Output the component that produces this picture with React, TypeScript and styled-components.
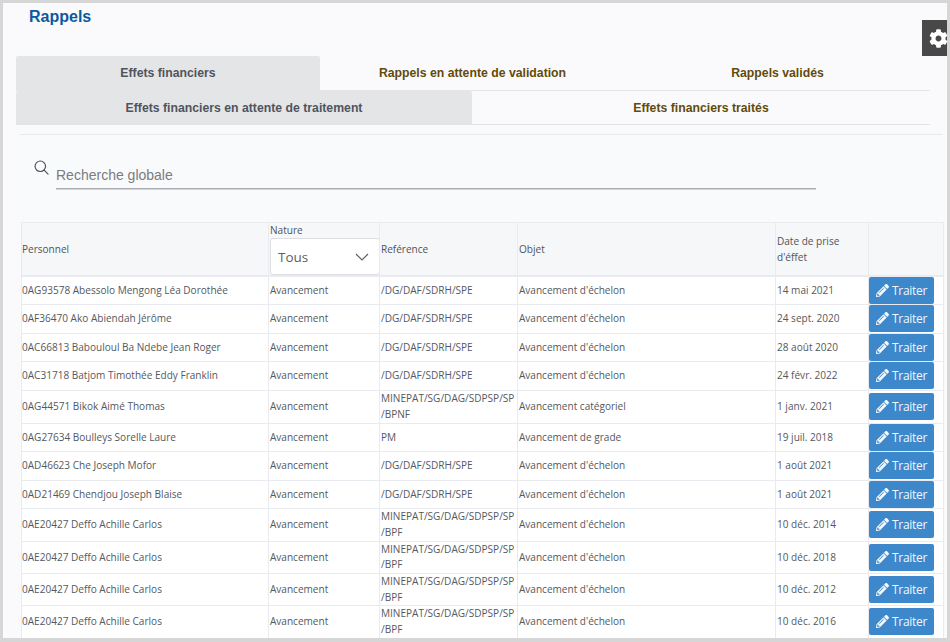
import React from "react";
import styled, { createGlobalStyle } from "styled-components";
import { FaCog, FaPencilAlt } from "react-icons/fa";

const Global = createGlobalStyle`
  html, body { margin: 0; padding: 0; background: #fff; }
  * { box-sizing: border-box; }
`;

const Frame = styled.div`
  position: relative;
  width: 950px;
  height: 642px;
  border: solid #d6d6d6;
  border-width: 3px 3px 4px 3px;
  background: #fafafc;
  overflow: hidden;
  font-family: "Liberation Sans", Arial, sans-serif;
`;

const Title = styled.h1`
  margin: 0;
  padding: 5px 0 0 26px;
  height: 53px;
  font-size: 16px;
  line-height: 17px;
  font-weight: 700;
  color: #0b5a9f;
`;

const GearBox = styled.div`
  position: absolute;
  top: 17px;
  right: 0;
  width: 25px;
  height: 36px;
  background: #484848;
  color: #fff;
  overflow: hidden;
  display: flex;
  align-items: center;
  padding-left: 7px;
  svg { flex: none; }
`;

const TabRow = styled.div<{ $h: number }>`
  display: flex;
  width: 914px;
  margin-left: 13px;
  height: ${(p) => p.$h}px;
`;

const Tab = styled.div<{ $active?: boolean; $w: number }>`
  width: ${(p) => p.$w}px;
  flex: none;
  display: flex;
  align-items: center;
  justify-content: center;
  font-size: 12.25px;
  font-weight: 700;
  background: ${(p) => (p.$active ? "#e4e5e7" : "transparent")};
  color: ${(p) => (p.$active ? "#50545c" : "#634a0a")};
  border-bottom: 1px solid ${(p) => (p.$active ? "#e4e5e7" : "#e2e4e8")};
  border-radius: ${(p) => (p.$active ? "2px 2px 0 0" : "0")};
`;

const Panel = styled.div`
  margin: 9px 4px 0 17px;
  border-top: 1px solid #e8eaee;
  background: #f9fafc;
`;

const SearchRow = styled.div`
  display: flex;
  align-items: flex-start;
  height: 87px;
  padding: 25px 0 0 14px;
  color: #4a4d52;
`;

const SearchIcon = styled.svg`
  width: 15px;
  height: 15px;
  flex: none;
  margin-right: 7px;
`;

const SearchField = styled.div`
  width: 760px;
  height: 29px;
  padding-top: 7px;
  border-bottom: 1px solid #a9abae;
  font-size: 14px;
  line-height: 17px;
  color: #7a7c80;
  box-shadow: 0 1px 0 #d5d6d8;
`;

const Table = styled.table`
  width: 922px;
  margin-left: 1px;
  table-layout: fixed;
  border-collapse: collapse;
  border: 1px solid #e9ebf0;
  font-family: "Open Sans", sans-serif;
  font-size: 10.05px;
  color: #55585e;
`;

const HeadRow = styled.tr`
  height: 53px;
  background: #f6f7f9;
`;

const Th = styled.th`
  padding: 0 0 0 1px;
  border: 1px solid #e9ebf0;
  border-bottom-width: 2px;
  font-weight: 400;
  text-align: left;
  line-height: 16px;
  vertical-align: middle;
  color: #505359;
  &:first-child { padding-left: 0; }
`;

const NatureLabel = styled.div`
  line-height: 16px;
  margin-top: -1px;
`;

const Select = styled.div`
  width: 110px;
  height: 37px;
  padding: 1px 10px 0 7px;
  background: #fff;
  border: 1px solid #dcdee2;
  border-radius: 3px;
  display: flex;
  align-items: center;
  justify-content: space-between;
  font-size: 13.5px;
  color: #5d6066;
`;

const BodyRow = styled.tr<{ $h: number }>`
  height: ${(p) => p.$h}px;
  background: #fff;
`;

const Td = styled.td`
  padding: 0 0 0 1px;
  border: 1px solid #e9ebf0;
  line-height: 15.5px;
  vertical-align: middle;
  word-break: break-word;
  &:first-child { padding-left: 0; }
`;

const ActionCell = styled(Td)`
  padding: 0;
`;

const Button = styled.button`
  display: flex;
  align-items: center;
  justify-content: center;
  gap: 3px;
  width: 65px;
  height: 27px;
  padding: 0;
  border: 0;
  border-radius: 2px;
  background: #3d87cb;
  color: #f2f7fc;
  font-family: "Open Sans", sans-serif;
  font-size: 12px;
  letter-spacing: -0.3px;
`;

type Row = [string, string, string, string, number];
const D = "/DG/DAF/SDRH/SPE";
const M = "MINEPAT/SG/DAG/SDPSP/SP";
const E = "Avancement d'échelon";

const rows: Row[] = [
  ["0AG93578 Abessolo Mengong Léa Dorothée", D, E, "14 mai 2021", 28],
  ["0AF36470 Ako Abiendah Jérôme", D, E, "24 sept. 2020", 28.5],
  ["0AC66813 Babouloul Ba Ndebe Jean Roger", D, E, "28 août 2020", 28.5],
  ["0AC31718 Batjom Timothée Eddy Franklin", D, E, "24 févr. 2022", 28.5],
  ["0AG44571 Bikok Aimé Thomas", M + " /BPNF", "Avancement catégoriel", "1 janv. 2021", 33],
  ["0AG27634 Boulleys Sorelle Laure", "PM", "Avancement de grade", "19 juil. 2018", 28.5],
  ["0AD46623 Che Joseph Mofor", D, E, "1 août 2021", 28.5],
  ["0AD21469 Chendjou Joseph Blaise", D, E, "1 août 2021", 28.5],
  ["0AE20427 Deffo Achille Carlos", M + " /BPF", E, "10 déc. 2014", 32.5],
  ["0AE20427 Deffo Achille Carlos", M + " /BPF", E, "10 déc. 2018", 32.5],
  ["0AE20427 Deffo Achille Carlos", M + " /BPF", E, "10 déc. 2012", 31.5],
  ["0AE20427 Deffo Achille Carlos", M + " /BPF", E, "10 déc. 2016", 32.5],
];

export default function App() {
  return (
    <>
      <Global />
      <Frame>
        <Title>Rappels</Title>
        <GearBox>
          <FaCog size={19} />
        </GearBox>
        <TabRow $h={35}>
          <Tab $active $w={304}>Effets financiers</Tab>
          <Tab $w={305}>Rappels en attente de validation</Tab>
          <Tab $w={305}>Rappels validés</Tab>
        </TabRow>
        <TabRow $h={34}>
          <Tab $active $w={456}>Effets financiers en attente de traitement</Tab>
          <Tab $w={458}>Effets financiers traités</Tab>
        </TabRow>
        <Panel>
          <SearchRow>
            <SearchIcon viewBox="0 0 16 16" fill="none" stroke="currentColor" strokeWidth="1.2">
              <circle cx="6.7" cy="6.7" r="5.6" />
              <path d="M10.8 10.8 15 15" strokeLinecap="round" />
            </SearchIcon>
            <SearchField>Recherche globale</SearchField>
          </SearchRow>
          <Table>
            <colgroup>
              <col style={{ width: 247 }} />
              <col style={{ width: 111 }} />
              <col style={{ width: 138 }} />
              <col style={{ width: 258 }} />
              <col style={{ width: 93 }} />
              <col style={{ width: 75 }} />
            </colgroup>
            <thead>
              <HeadRow>
                <Th>Personnel</Th>
                <Th>
                  <NatureLabel>Nature</NatureLabel>
                  <Select>
                    Tous
                    <svg width="14" height="8" viewBox="0 0 14 8" fill="none" stroke="#5d6066" strokeWidth="1.2">
                      <path d="M1 1l6 6 6-6" />
                    </svg>
                  </Select>
                </Th>
                <Th>Reférence</Th>
                <Th>Objet</Th>
                <Th>Date de prise d'éffet</Th>
                <Th />
              </HeadRow>
            </thead>
            <tbody>
              {rows.map((r, i) => (
                <BodyRow key={i} $h={r[4]}>
                  <Td>{r[0]}</Td>
                  <Td>Avancement</Td>
                  <Td>{r[1]}</Td>
                  <Td>{r[2]}</Td>
                  <Td>{r[3]}</Td>
                  <ActionCell>
                    <Button>
                      <FaPencilAlt size={13} />
                      Traiter
                    </Button>
                  </ActionCell>
                </BodyRow>
              ))}
            </tbody>
          </Table>
        </Panel>
      </Frame>
    </>
  );
}
